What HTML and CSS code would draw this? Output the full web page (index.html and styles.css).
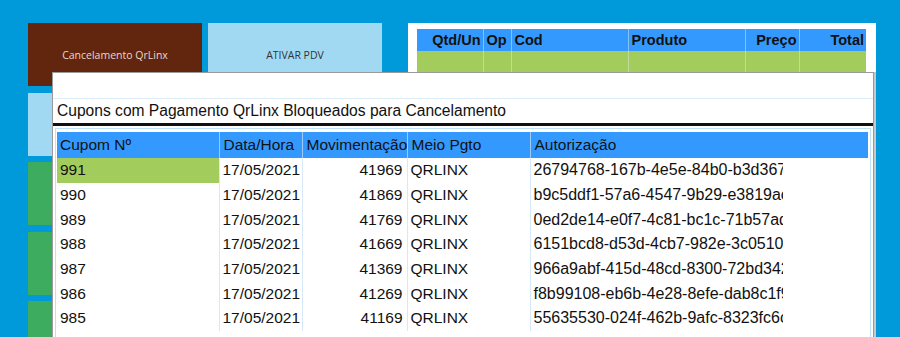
FILE: index.html
```html
<!DOCTYPE html>
<html lang="pt-BR">
  <head>
    <meta charset="UTF-8" />
    <meta name="viewport" content="width=device-width, initial-scale=1.0" />
    <title>PDV - Cancelamento QrLinx</title>
    <link rel="stylesheet" href="styles.css">
  </head>
  <body>
    <div class="screen">
      <div class="buttons">
        <button class="btn btn-brown">Cancelamento QrLinx</button>
        <button class="btn btn-light">ATIVAR PDV</button>
        <button class="btn btn-light"></button>
        <button class="btn btn-light"></button>
        <button class="btn btn-green"></button>
        <button class="btn btn-green"></button>
        <button class="btn btn-green"></button>
        <button class="btn btn-green"></button>
        <button class="btn btn-green"></button>
        <button class="btn btn-green"></button>
      </div>

      <div class="cart">
        <table class="cart-table">
          <colgroup>
            <col style="width: 66px">
            <col style="width: 28px">
            <col style="width: 117px">
            <col style="width: 117px">
            <col style="width: 54px">
            <col style="width: 67px">
          </colgroup>
          <thead>
            <tr>
              <th class="right">Qtd/Un</th>
              <th>Op</th>
              <th>Cod</th>
              <th>Produto</th>
              <th class="right">Preço</th>
              <th class="right">Total</th>
            </tr>
          </thead>
          <tbody>
            <tr class="selected">
              <td></td><td></td><td></td><td></td><td></td><td></td>
            </tr>
          </tbody>
        </table>
      </div>
    </div>

    <div class="dialog">
      <div class="dialog-top"></div>
      <div class="dialog-title">Cupons com Pagamento QrLinx Bloqueados para Cancelamento</div>
      <div class="dialog-bar"></div>

      <div class="grid">
        <table class="grid-table">
          <colgroup>
            <col style="width: 162px">
            <col style="width: 83px">
            <col style="width: 105px">
            <col style="width: 123px">
            <col style="width: 253px">
            <col>
          </colgroup>
          <thead>
            <tr>
              <th>Cupom Nº</th>
              <th>Data/Hora</th>
              <th>Movimentação</th>
              <th>Meio Pgto</th>
              <th>Autorização</th>
              <th class="filler"></th>
            </tr>
          </thead>
          <tbody id="cuponsBody"></tbody>
        </table>
      </div>
    </div>

    <script>
      const cupons = [
        ['991', '17/05/2021', '41969', 'QRLINX', '26794768-167b-4e5e-84b0-b3d367'],
        ['990', '17/05/2021', '41869', 'QRLINX', 'b9c5ddf1-57a6-4547-9b29-e3819ac'],
        ['989', '17/05/2021', '41769', 'QRLINX', '0ed2de14-e0f7-4c81-bc1c-71b57ad'],
        ['988', '17/05/2021', '41669', 'QRLINX', '6151bcd8-d53d-4cb7-982e-3c0510f'],
        ['987', '17/05/2021', '41369', 'QRLINX', '966a9abf-415d-48cd-8300-72bd342'],
        ['986', '17/05/2021', '41269', 'QRLINX', 'f8b99108-eb6b-4e28-8efe-dab8c1f9'],
        ['985', '17/05/2021', '41169', 'QRLINX', '55635530-024f-462b-9afc-8323fc6c']
      ];

      const body = document.getElementById('cuponsBody');
      body.innerHTML = cupons
        .map((c, i) => `<tr>
            <td class="${i === 0 ? 'current' : ''}">${c[0]}</td>
            <td>${c[1]}</td>
            <td class="right">${c[2]}</td>
            <td>${c[3]}</td>
            <td class="auth">${c[4]}</td>
            <td class="filler"></td>
          </tr>`)
        .join('');
    </script>
  </body>
</html>
```

FILE: styles.css
```css
html,
body {
  margin: 0;
  height: 337px;
  overflow: hidden;
}
body {
  background-color: #0099da;
  font-family: "Liberation Sans", Arial, sans-serif;
  color: #111;
  position: relative;
}
.screen {
  display: flex;
  align-items: flex-start;
  padding: 23px 0 0 28px;
}
.buttons {
  display: grid;
  grid-template-columns: 174px 174px;
  grid-template-rows: repeat(5, 63px);
  gap: 6.5px 6px;
  height: 314px;
  overflow: hidden;
}
.btn {
  border: none;
  margin: 0;
  padding: 0;
  font-family: "Open Sans", "Liberation Sans", sans-serif;
  font-size: 10.5px;
}
.btn-brown {
  background-color: #62260f;
  color: #e6d6cc;
}
.btn-light {
  background-color: #a1d9f3;
  color: #333;
}
.btn-green {
  background-color: #3dac5e;
}
.cart {
  margin-left: 26px;
  width: 468px;
  height: 314px;
  background-color: #fff;
  padding: 6px 10px 0 9px;
  box-sizing: border-box;
}
.cart-table {
  border-collapse: collapse;
  table-layout: fixed;
  width: 449px;

  th {
    height: 22px;
    padding: 0 2px 0 3px;
    background-color: #3399ff;
    border-left: 1px solid #86c0f6;
    color: #111;
    font-size: 14.5px;
    font-weight: bold;
    text-align: left;
    white-space: nowrap;
  }

  th:first-child {
    border-left: none;
  }

  .right {
    text-align: right;
  }

  td {
    height: 24px;
    background-color: #a2cd5c;
    border-left: 1px solid #c0dd98;
  }

  td:first-child {
    border-left: none;
  }
}
.dialog {
  position: absolute;
  left: 52px;
  top: 72px;
  bottom: 0;
  width: 820px;
  background-color: #fff;
  border: 1px solid #9a9a9a;
  border-bottom: none;
  box-shadow: 2px 0 0 #c8c8c8;
}
.dialog-top {
  height: 25px;
  border-bottom: 1px solid #dcedf7;
}
.dialog-title {
  height: 24px;
  line-height: 24px;
  padding-left: 4px;
  font-size: 15.6px;
  color: #111;
}
.dialog-bar {
  height: 3px;
  background-color: #111;
}
.grid {
  margin: 2px 2px 0 2px;
  padding: 3px 2px 0 1px;
  border: 1px solid #bfe1f7;
  border-bottom: none;
  height: 206px;
}
.grid-table {
  border-collapse: collapse;
  table-layout: fixed;
  width: 811px;
  font-size: 15.5px;

  th {
    height: 26px;
    padding: 0 0 0 4px;
    background-color: #3399ff;
    border-left: 1px solid #9bcbfb;
    font-weight: normal;
    text-align: left;
    white-space: nowrap;
    overflow: hidden;
  }

  th:first-child {
    padding-left: 3px;
    border-left: none;
  }

  td {
    height: 24.67px;
    padding: 0 0 0 3px;
    border-left: 1px solid #d5e9f8;
    white-space: nowrap;
    overflow: hidden;
  }

  td:first-child {
    border-left: none;
  }

  td.right {
    text-align: right;
    padding: 0 4px 0 0;
  }

  td.auth {
    font-size: 16px;
  }

  th.filler,
  td.filler {
    border-left: none;
  }

  .current {
    background-color: #a2cd5c;
  }
}
```
